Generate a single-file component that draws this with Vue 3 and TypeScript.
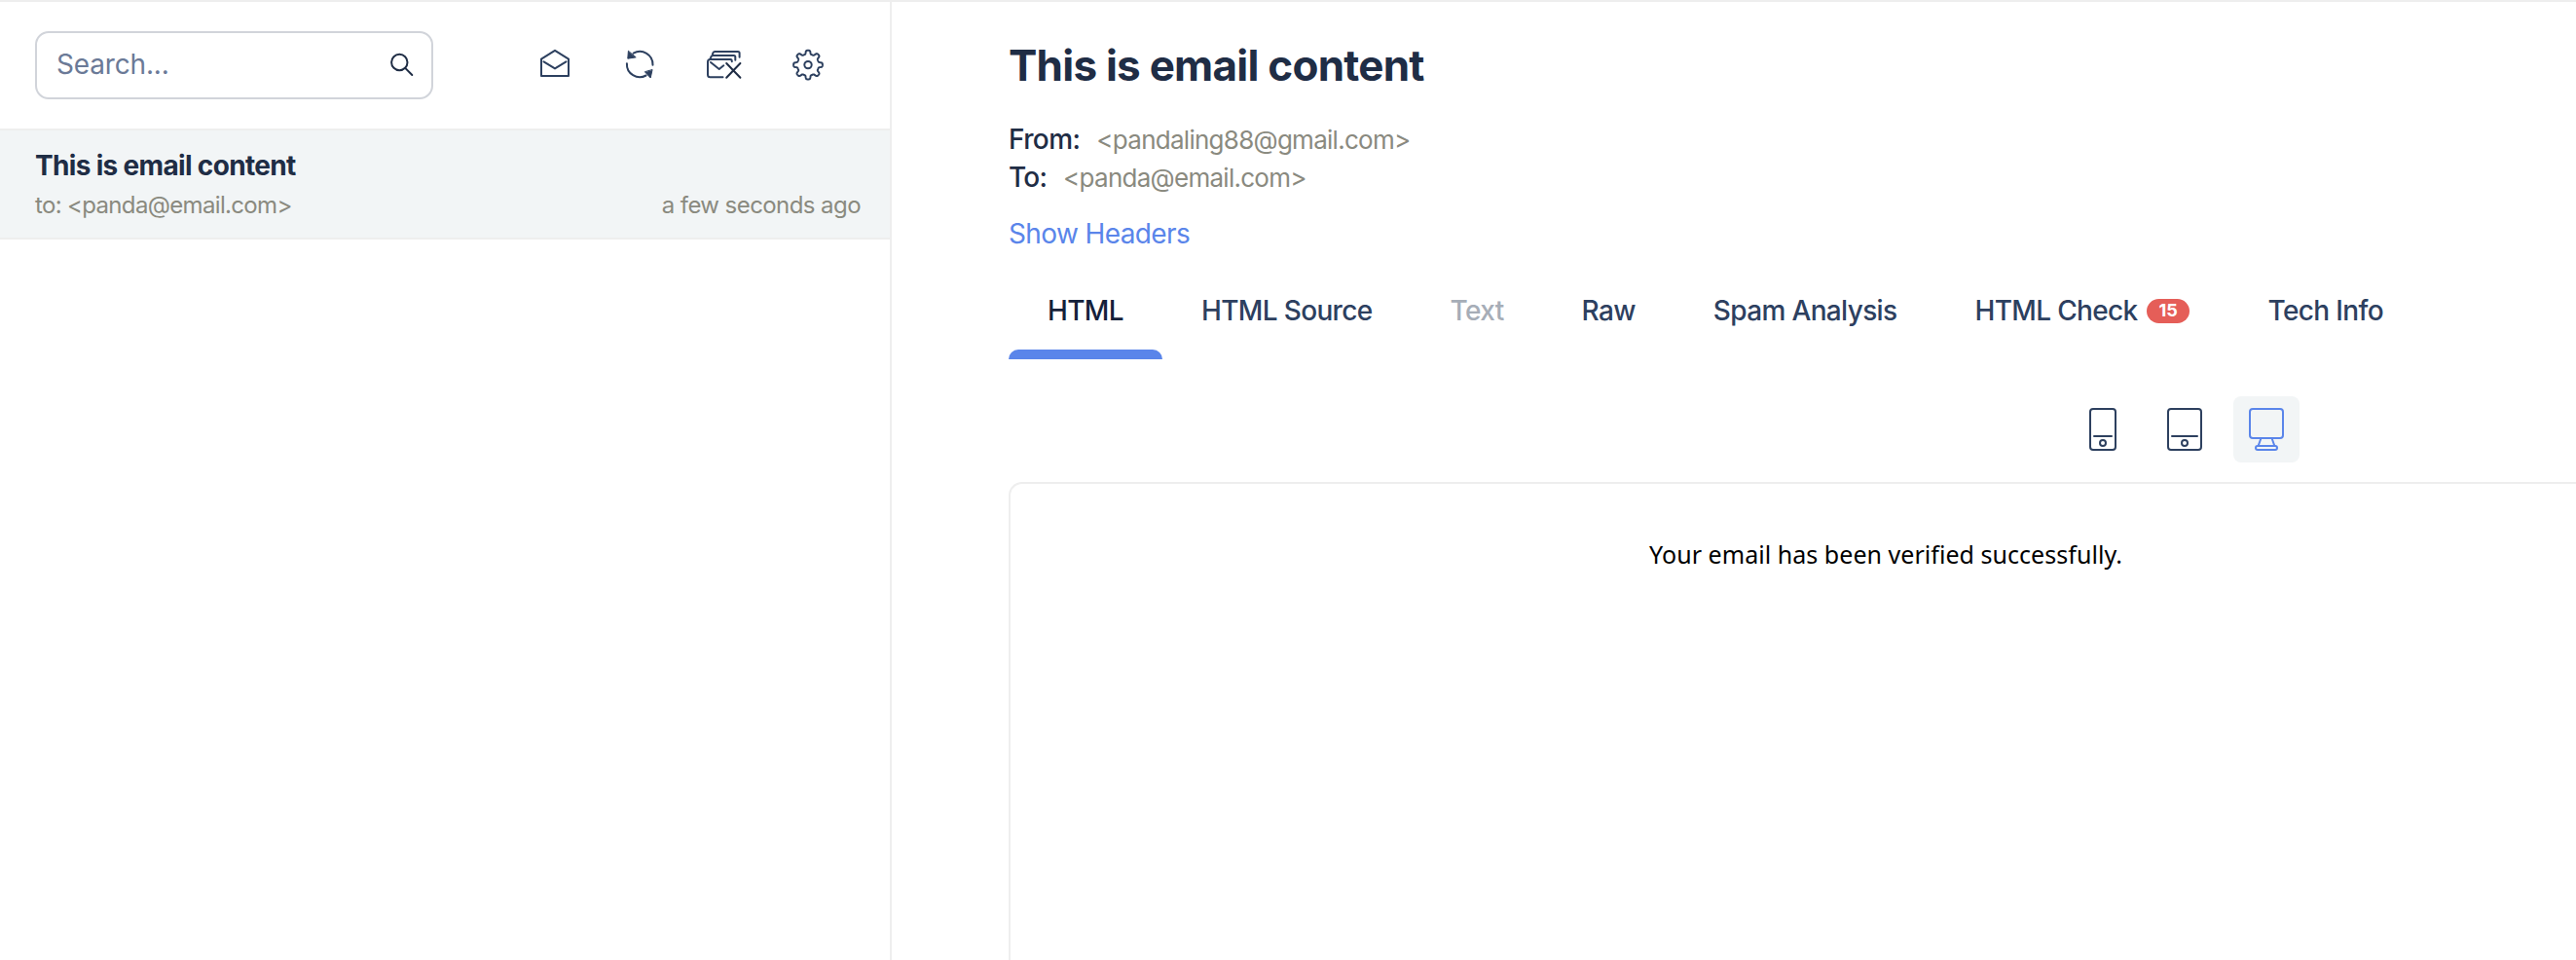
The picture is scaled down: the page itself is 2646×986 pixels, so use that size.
<script setup lang="ts">
interface Tab {
  label: string
  state?: 'active' | 'disabled'
  badge?: number
}

const tabs: Tab[] = [
  { label: 'HTML', state: 'active' },
  { label: 'HTML Source' },
  { label: 'Text', state: 'disabled' },
  { label: 'Raw' },
  { label: 'Spam Analysis' },
  { label: 'HTML Check', badge: 15 },
  { label: 'Tech Info' },
]

// Outline of the eight-toothed settings gear, centred on (20, 20.6).
function gearOutline(): string {
  const steps = 240
  const points: string[] = []
  for (let i = 0; i < steps; i++) {
    const a = (i / steps) * Math.PI * 2
    const r = 13 + 1.9 * (Math.tanh(2.4 * Math.cos(8 * a) - 0.2) / Math.tanh(2.4))
    points.push(`${(20 + r * Math.cos(a)).toFixed(2)} ${(20.6 + r * Math.sin(a)).toFixed(2)}`)
  }
  return `M${points.join('L')}Z`
}
const gear = gearOutline()
</script>

<template>
  <div class="app">
    <aside class="sidebar">
      <div class="toolbar">
        <label class="search">
          <span class="placeholder">Search...</span>
          <svg class="search-icon" width="26" height="26" viewBox="0 0 26 26">
            <circle cx="10.3" cy="10" r="8.2" />
            <path d="M16.2 15.9L23.3 23" />
          </svg>
        </label>
        <div class="actions">
          <svg class="icon" viewBox="0 0 40 40">
            <path d="M6 14.6L20 5.8L34 14.6V32.1H6Z" />
            <path d="M8.5 17.3L20 24.4L31.5 17.3" />
          </svg>
          <svg class="icon" viewBox="0 0 40 40">
            <path d="M13.6 8.6A13.3 13.3 0 0 1 33.5 20.7" />
            <path d="M6.9 19.2A13.3 13.3 0 0 0 26.6 31.5" />
            <path class="solid" d="M8.4 6.6L7.8 14.2L15.8 12.9Z" />
            <path class="solid" d="M33 25.9L31.2 34L25.6 28Z" />
          </svg>
          <svg class="icon" viewBox="0 0 40 40">
            <path d="M19.5 33.2H6.5Q4 33.2 4 30.7V17.5Q4 15 6.5 15H27.2Q28.8 15 28.8 17.2" />
            <path d="M6.6 14.2L7.6 12Q8 11 9.2 11H30.8Q32.3 11 32.3 12.5V15.8" />
            <path d="M8.8 9.8L9.6 8Q10 7 11.2 7H35Q36.6 7 36.6 8.6V12.8" />
            <path d="M7 18L15.7 25L20.3 21.3" />
            <path class="cross" d="M23.2 19L37.4 33.8M37.4 19L23.2 33.8" />
          </svg>
          <svg class="icon" viewBox="0 0 40 40">
            <path :d="gear" />
            <circle cx="20" cy="20.6" r="3.7" />
          </svg>
        </div>
      </div>
      <article class="mail">
        <h2 class="mail-title">This is email content</h2>
        <div class="mail-meta">
          <span>to: &lt;panda@email.com&gt;</span>
          <span class="mail-time">a few seconds ago</span>
        </div>
      </article>
    </aside>

    <main class="content">
      <h1 class="subject">This is email content</h1>
      <div class="address from">
        <span class="key">From:</span><span class="value">&lt;pandaling88@gmail.com&gt;</span>
      </div>
      <div class="address to">
        <span class="key">To:</span><span class="value">&lt;panda@email.com&gt;</span>
      </div>
      <a class="show-headers">Show Headers</a>
      <nav class="tabs">
        <div v-for="tab in tabs" :key="tab.label" class="tab" :class="tab.state">
          <span>{{ tab.label }}</span>
          <span v-if="tab.badge" class="badge">{{ tab.badge }}</span>
        </div>
      </nav>
      <div class="devices">
        <button class="device" type="button">
          <svg viewBox="0 0 68 68">
            <rect x="21" y="13" width="26" height="42" rx="3" />
            <path d="M25 41H43" />
            <circle cx="34" cy="48" r="3" />
          </svg>
        </button>
        <button class="device" type="button">
          <svg viewBox="0 0 68 68">
            <rect x="17" y="13" width="34" height="42" rx="3" />
            <path d="M21 41H47" />
            <circle cx="34" cy="48" r="3" />
          </svg>
        </button>
        <button class="device selected" type="button">
          <svg viewBox="0 0 68 68">
            <rect x="17" y="13" width="34" height="30" rx="3" />
            <path d="M28.3 43.5L25.6 51M39.7 43.5L42.4 51" />
            <rect x="23" y="51" width="22" height="4" rx="2" />
          </svg>
        </button>
      </div>
      <section class="preview">
        <p class="message">Your email has been verified successfully.</p>
      </section>
    </main>
  </div>
</template>

<style>
body {
  overflow: hidden;
}
</style>

<style scoped>
.app {
  display: flex;
  box-sizing: border-box;
  width: 2646px;
  height: 986px;
  border-top: 2px solid #eeeeee;
  overflow: hidden;
  background: #fff;
  color: #1f2d45;
  font: 400 28px/40px Inter, "Liberation Sans", sans-serif;
}
.sidebar {
  flex: none;
  width: 914px;
  border-right: 2px solid #eeeeee;
}
.toolbar {
  display: flex;
  align-items: center;
  box-sizing: border-box;
  height: 132px;
  padding: 0 64px 0 36px;
  border-bottom: 2px solid #eeeeee;
}
.search {
  display: flex;
  align-items: center;
  justify-content: space-between;
  box-sizing: border-box;
  width: 409px;
  height: 70px;
  padding: 0 17px 0 20px;
  border: 2px solid #d1d4da;
  border-radius: 14px;
}
.placeholder {
  padding-bottom: 2px;
  color: #6b7a97;
  letter-spacing: -0.16px;
}
.search-icon {
  margin-bottom: 1px;
  fill: none;
  stroke: #1f2d45;
  stroke-width: 2;
  stroke-linecap: round;
}
.actions {
  display: flex;
  gap: 46.6px;
  margin: 0 0 2px 105px;
}
.icon {
  width: 40px;
  height: 40px;
  fill: none;
  stroke: #2d405f;
  stroke-width: 2;
  stroke-linejoin: round;
  stroke-linecap: round;
}
.icon .solid {
  fill: #2d405f;
  stroke-width: 1;
}
.icon .cross {
  stroke: #1f2d45;
}
.mail {
  box-sizing: border-box;
  height: 112px;
  padding: 16px 30px 0 36px;
  border-bottom: 2px solid #eeeeee;
  background: #f2f5f6;
}
.mail-title {
  margin: 0;
  font-size: 28px;
  font-weight: 700;
  line-height: 40px;
  letter-spacing: -0.67px;
}
.mail-meta {
  display: flex;
  justify-content: space-between;
  margin-top: 2px;
  color: #8a8a7f;
  font-size: 24px;
  line-height: 37px;
  letter-spacing: -0.66px;
}
.mail-time {
  letter-spacing: -0.57px;
}
.content {
  flex: 1;
  min-width: 0;
  padding: 35px 0 0 120px;
}
.subject {
  margin: 0 0 27px;
  font-size: 44px;
  font-weight: 700;
  line-height: 60px;
  letter-spacing: -0.76px;
}
.address {
  display: flex;
  align-items: baseline;
  height: 39px;
  line-height: 39px;
}
.key {
  font-weight: 500;
  letter-spacing: -0.6px;
}
.to .key {
  letter-spacing: -0.8px;
}
.value {
  margin-left: 17px;
  color: #8a8a7f;
  font-size: 26px;
  letter-spacing: -0.73px;
}
.show-headers {
  display: block;
  margin-top: 18px;
  color: #5a85ea;
  letter-spacing: -0.62px;
}
.tabs {
  display: flex;
  height: 70px;
  margin-top: 39px;
}
.tab {
  position: relative;
  display: flex;
  box-sizing: border-box;
  height: 70px;
  padding: 0 40px;
  color: #2d405f;
  font-weight: 500;
  letter-spacing: -0.645px;
  white-space: nowrap;
}
.tab.active {
  color: #14213a;
}
.tab.active::after {
  content: "";
  position: absolute;
  right: 0;
  bottom: 0;
  left: 0;
  height: 10px;
  border-radius: 10px 10px 0 0;
  background: #5a85ea;
}
.tab.disabled {
  color: #a6adb7;
}
.badge {
  box-sizing: border-box;
  height: 25px;
  margin: 8px 0 0 9px;
  padding: 0 12.8px;
  border-radius: 12.5px;
  background: #e55e58;
  color: #fff;
  font-size: 18px;
  font-weight: 700;
  line-height: 24px;
  letter-spacing: 0;
}
.devices {
  display: flex;
  gap: 16px;
  margin: 38px 0 0 1090px;
}
.device {
  width: 68px;
  height: 68px;
  padding: 0;
  border: 0;
  border-radius: 8px;
  background: none;
  color: #2d405f;
}
.device.selected {
  background: #f2f5f6;
  color: #5a85ea;
}
.device svg {
  display: block;
  width: 68px;
  height: 68px;
  fill: none;
  stroke: currentColor;
  stroke-width: 2;
  stroke-linecap: round;
}
.preview {
  box-sizing: border-box;
  height: 600px;
  margin-top: 20px;
  border: 2px solid #eeeeee;
  border-right: 0;
  border-radius: 14px 0 0 0;
}
.message {
  width: 1798px;
  margin: 52px 0 0;
  color: #000;
  font: 400 25px/40px "Noto Sans", "Open Sans", sans-serif;
  letter-spacing: 0.04px;
  text-align: center;
}
</style>
